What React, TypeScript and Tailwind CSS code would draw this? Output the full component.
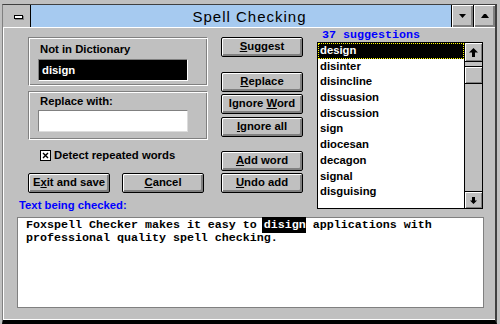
import React from 'react'

const suggestions = [
  'design',
  'disinter',
  'disincline',
  'dissuasion',
  'discussion',
  'sign',
  'diocesan',
  'decagon',
  'signal',
  'disguising',
]

interface BtnProps {
  children: React.ReactNode
  className?: string
}

const Btn: React.FC<BtnProps> = ({ children, className = '' }) => (
  <div
    className={`flex items-center justify-center h-[20px] w-[82px] border border-black rounded-[2px] bg-[#c0c0c0] shadow-[inset_1px_1px_0_#fff,inset_-2px_-2px_0_#808080] text-[11.3px] font-bold leading-none text-black ${className}`}
  >
    {children}
  </div>
)

const GroupBox: React.FC<{ children: React.ReactNode; className?: string }> = ({ children, className = '' }) => (
  <div
    className={`h-[49px] flex flex-col border border-t-[#808080] border-l-[#808080] border-b-white border-r-white shadow-[inset_1px_1px_0_#fff,inset_-1px_-1px_0_#808080] ${className}`}
  >
    {children}
  </div>
)

const TitleButton: React.FC<{ children: React.ReactNode }> = ({ children }) => (
  <div className="w-[22px] h-full border-l border-black bg-[#c0c0c0] shadow-[inset_1px_1px_0_#fff,inset_-2px_-2px_0_#808080] flex items-center justify-center">
    {children}
  </div>
)

const ArrowUp = () => (
  <svg width="9" height="9" viewBox="0 0 9 9">
    <polygon points="4.5,0 9,4.5 6,4.5 6,9 3,9 3,4.5 0,4.5" fill="#000" />
  </svg>
)

const ArrowDown = () => (
  <svg width="7" height="7" viewBox="0 0 7 7">
    <polygon points="2,0 5,0 5,3.5 7,3.5 3.5,7 0,3.5 2,3.5" fill="#000" />
  </svg>
)

const ScrollBar = () => (
  <div className="w-[18px] h-full border-l border-black flex flex-col bg-[#c0c0c0]">
    <div className="h-[19px] border-b border-black shadow-[inset_1px_1px_0_#fff,inset_-1px_-1px_0_#808080] flex items-center justify-center">
      <ArrowUp />
    </div>
    <div className="flex-1 flex flex-col">
      <div className="mt-[4px] h-[18px] border-y border-black shadow-[inset_1px_1px_0_#fff,inset_-1px_-1px_0_#808080]" />
    </div>
    <div className="h-[17px] border-t border-black shadow-[inset_1px_1px_0_#fff,inset_-1px_-1px_0_#808080] flex items-center justify-center">
      <ArrowDown />
    </div>
  </div>
)

export default function App() {
  return (
    <div className="w-[500px] h-[324px] bg-[#c0c0c0] pt-[4px] pl-[2px] overflow-hidden font-['Liberation_Sans',Arial,sans-serif]">
      <div className="w-[495px] h-[320px] flex flex-col border-t border-l border-r-2 border-b-4 border-t-[#404040] border-l-[#808080] border-r-[#404040] border-b-black">
        {/* title bar */}
        <div className="h-[23px] flex border-b border-white">
          <div className="w-[28px] h-full border-r border-black flex items-center pl-[11px] pt-[2px]">
            <div className="w-[9px] h-[4px] border border-black bg-white shadow-[1px_1px_0_#808080]" />
          </div>
          <div className="flex-1 h-full bg-[#a6caf0] flex items-center justify-center pl-[17px] text-[15px] leading-none tracking-[1px] text-black">
            Spell Checking
          </div>
          <TitleButton>
            <svg width="7" height="4" viewBox="0 0 7 4">
              <polygon points="0,0 7,0 3.5,4" fill="#000" />
            </svg>
          </TitleButton>
          <TitleButton>
            <svg width="8" height="4" viewBox="0 0 8 4">
              <polygon points="3,0 5,0 8,4 0,4" fill="#000" />
            </svg>
          </TitleButton>
        </div>

        {/* body */}
        <div className="flex-1 flex flex-col border-l border-b border-white">
          <div className="flex items-start">
            <div className="flex flex-col">
              <div className="flex items-start pl-[24px]">
                {/* left column */}
                <div className="w-[180px] mt-[9px] flex flex-col">
                  <GroupBox>
                    <div className="pt-[5px] pl-[11px] h-[18px] leading-[13px] text-[11.3px] font-bold text-black">
                      Not in Dictionary
                    </div>
                    <div className="mt-[3px] ml-[9px] w-[150px] h-[22px] border border-t-[#808080] border-l-[#808080] border-b-white border-r-white bg-black flex items-center pl-[3px] text-[11.3px] font-bold text-white">
                      disign
                    </div>
                  </GroupBox>
                  <GroupBox className="mt-[5px]">
                    <div className="pt-[3px] pl-[11px] h-[16px] leading-[13px] text-[11.3px] font-bold text-black">
                      Replace with:
                    </div>
                    <div className="mt-[2px] ml-[9px] w-[150px] h-[22px] border border-t-[#808080] border-l-[#808080] border-b-[#dcdcdc] border-r-[#dcdcdc] bg-white" />
                  </GroupBox>
                  <div className="mt-[10px] ml-[12px] h-[11px] flex items-center">
                    <div className="w-[11px] h-[11px] border border-black bg-white flex items-center justify-center">
                      <svg width="7" height="7" viewBox="0 0 7 7">
                        <path d="M1 1L6 6M6 1L1 6" stroke="#000" strokeWidth="1.4" />
                      </svg>
                    </div>
                    <span className="ml-[3px] text-[11.3px] font-bold leading-none text-black">Detect repeated words</span>
                  </div>
                  <div className="mt-[12px] flex gap-[12px]">
                    <Btn>
                      <span>
                        E<u>x</u>it and save
                      </span>
                    </Btn>
                    <Btn>
                      <span>
                        <u>C</u>ancel
                      </span>
                    </Btn>
                  </div>
                </div>

                {/* middle buttons */}
                <div className="w-[82px] ml-[13px] mt-[9px] flex flex-col">
                  <Btn>
                    <span>
                      <u>S</u>uggest
                    </span>
                  </Btn>
                  <Btn className="mt-[15px]">
                    <span>
                      <u>R</u>eplace
                    </span>
                  </Btn>
                  <Btn className="mt-[2px]">
                    <span>
                      Ignore <u>W</u>ord
                    </span>
                  </Btn>
                  <Btn className="mt-[3px]">
                    <span>
                      <u>I</u>gnore all
                    </span>
                  </Btn>
                  <Btn className="mt-[14px]">
                    <span>
                      <u>A</u>dd word
                    </span>
                  </Btn>
                  <Btn className="mt-[2px]">
                    <span>
                      <u>U</u>ndo add
                    </span>
                  </Btn>
                </div>
              </div>
              <div className="mt-[6px] pl-[15px] h-[13px] leading-[13px] text-[11.3px] font-bold text-[#0000ff]">
                Text being checked:
              </div>
            </div>

            {/* suggestions */}
            <div className="ml-[14px] w-[166px] flex flex-col pt-[1px]">
              <div className="h-[13px] pl-[5px] leading-[13px] text-[11.67px] font-bold text-[#0000ff] font-['Liberation_Mono','Courier_New',monospace]">
                37 suggestions
              </div>
              <div className="h-[167px] border border-black bg-white flex">
                <div className="flex-1 flex flex-col">
                  {suggestions.map((word, i) => (
                    <div
                      key={word}
                      className={
                        i === 0
                          ? 'h-[15.7px] leading-[13.7px] pl-[1px] bg-black text-white border border-dotted border-[#ffff00] text-[11.3px] font-bold'
                          : 'h-[15.7px] leading-[15.7px] pl-[2px] text-black text-[11.3px] font-bold'
                      }
                    >
                      {word}
                    </div>
                  ))}
                </div>
                <ScrollBar />
              </div>
            </div>
          </div>

          {/* text being checked */}
          <div className="mt-[5px] ml-[13px] w-[467px] h-[91px] border border-[#808080] bg-white pl-[8px] pt-[1px] font-['Liberation_Mono','Courier_New',monospace] text-[11.67px] font-bold leading-[13px] text-black whitespace-pre">
            <div>
              Foxspell Checker makes it easy to{' '}
              <span className="bg-black text-white -ml-[2px] pl-[2px] py-[1px]">disign</span> applications with
            </div>
            <div>professional quality spell checking.</div>
          </div>
        </div>
      </div>
    </div>
  )
}
